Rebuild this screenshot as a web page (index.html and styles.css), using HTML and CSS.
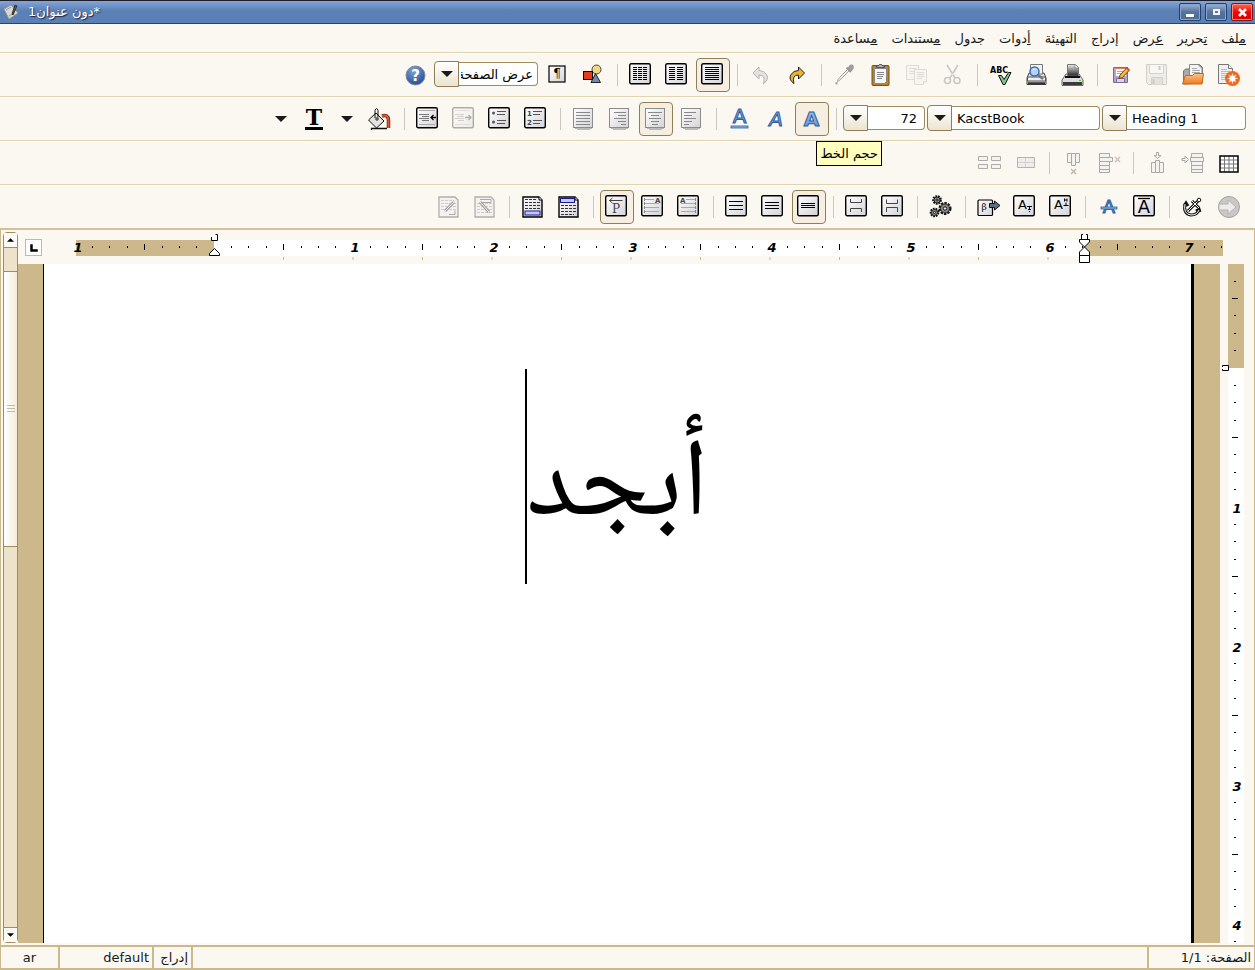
FILE: index.html
```html
<!DOCTYPE html>
<html lang="ar" dir="rtl">
<head>
  <meta charset="UTF-8"/>
  <meta name="viewport" content="width=device-width,initial-scale=1.0"/>
  <title>*دون عنوان1</title>
  <link rel="stylesheet" href="styles.css">
</head>
<body>
  <!-- shared fills -->
  <svg class="fills" aria-hidden="true">
    <defs>
      <linearGradient id="gPaper" x1="0" y1="0" x2="1" y2="1"><stop offset="0" stop-color="#fff"/><stop offset="1" stop-color="#d4d4d8"/></linearGradient>
      <linearGradient id="gOrange" x1="0" y1="0" x2="0" y2="1"><stop offset="0" stop-color="#fdc48a"/><stop offset="1" stop-color="#ee7a1c"/></linearGradient>
      <linearGradient id="gBlue" x1="0" y1="0" x2="0" y2="1"><stop offset="0" stop-color="#a9c8ec"/><stop offset="1" stop-color="#5b8fcf"/></linearGradient>
      <linearGradient id="gDark" x1="0" y1="0" x2="0" y2="1"><stop offset="0" stop-color="#eee"/><stop offset="1" stop-color="#222"/></linearGradient>
      <radialGradient id="gHelp" cx=".4" cy=".25" r=".8"><stop offset="0" stop-color="#7fa3d8"/><stop offset="1" stop-color="#1f4c94"/></radialGradient>
      <pattern id="ticksH" x="31" y="0" width="139" height="34" patternUnits="userSpaceOnUse">
        <path d="M17 17h1M34 17h1M52 17h1M87 17h1M104 17h1M121 17h1" stroke="#000" stroke-width="2"/>
        <path d="M69.500 14v6" stroke="#000"/>
      </pattern>
      <pattern id="ticksV" x="0" y="-35" width="16" height="139" patternUnits="userSpaceOnUse">
        <path d="M6 17.500h2M6 34.500h2M6 52.500h2M6 86.500h2M6 104.500h2M6 121.500h2M4 69.500h6" stroke="#000"/>
      </pattern>
    </defs>
  </svg>

  <!-- icon sprite -->
  <svg class="sprite" aria-hidden="true">
    <symbol id="frame" viewBox="0 0 24 24"><rect x=".7" y=".7" width="20.600" height="20" rx="1.500" fill="url(#gPaper)" stroke="#000" stroke-width="1.400"/></symbol>
    <symbol id="sheet" viewBox="0 0 24 24"><path d="M3 21.500h17M5 22.500h13" stroke="#bbb"/><rect x="1.500" y="1.500" width="19" height="19" fill="url(#gPaper)" stroke="#8c8c8c"/></symbol>

    <symbol id="i-new" viewBox="0 0 24 24"><path d="M1.500 1.500h10l4 4v15h-14z" fill="#f0f0f0" stroke="#777"/><path d="M11.500 1.500v4h4" fill="#fff" stroke="#777"/><path d="M4 6.500h6M4 8.500h9M4 10.500h9M4 12.500h6M4 14.500h5M4 16.500h5" stroke="#bbb"/><circle cx="15.500" cy="15.500" r="7.500" fill="#f5661b"/><path d="M15.500 10.500v10M10.500 15.500h10M12 12l7 7M19 12l-7 7" stroke="#ffd9b8" stroke-width="1.200"/><circle cx="15.500" cy="15.500" r="3" fill="#fff"/></symbol>
    <symbol id="i-open" viewBox="0 0 24 24"><path d="M2.500 21V8l2-2h5V1.500h9l3 3V20z" fill="#aaa" stroke="#777"/><path d="M8.500 1.500h8.500l4 4V14h-12.500z" fill="#f4f4f4" stroke="#888"/><path d="M11 5.500h5M11 7.500h8M11 9.500h8" stroke="#aaa"/><path d="M4.500 12.500h7l2-2h9l-1.500 10.500H1.500z" fill="url(#gOrange)" stroke="#c9681b"/></symbol>
    <symbol id="i-save" viewBox="0 0 24 24"><path d="M1.500 1.500h20v20h-18l-2-2z" fill="#efede9" stroke="#d2d0cd"/><path d="M4.500 2v8.500h14V2" fill="#f8f7f4" stroke="#d6d4d1"/><path d="M6.500 21.500v-7h11v7" fill="#e4e2de" stroke="#d2d0cd"/><path d="M14.500 3v4M8.500 16v5" stroke="#cccac7" stroke-width="2"/></symbol>
    <symbol id="i-edit" viewBox="0 0 24 24"><path d="M4.500 4.500h14v15h-14z" fill="#b8a5c8" stroke="#7e6b93"/><path d="M7 5h10v8H7z" fill="#fff"/><path d="M7 5.500h10" stroke="#e57d5b"/><path d="M8 8.500h6M8 10.500h5" stroke="#aaa"/><path d="M7.500 15.500h8v4h-8z" fill="#dcd6e4" stroke="#7e6b93"/><path d="M10 15.500l1-3.500 7-7.500 2.500 2.500-7 7.500z" fill="#f5b73c" stroke="#6d4c10"/><path d="M17 5.500l2.500 2.500 1-1-2.500-2.500z" fill="#d44"/></symbol>
    <symbol id="i-print" viewBox="0 0 24 24"><path d="M5 11h13l4 6v5.500H1V17z" fill="#ddd" stroke="#666"/><path d="M6.500 13V1.500h8l3 3V13z" fill="url(#gDark)" stroke="#777"/><path d="M14 1.500v3.500h3.500" fill="#fff" stroke="#888"/><path d="M4 14h15" stroke="#111" stroke-width="2"/><path d="M2 20.500h19" stroke="#3a3a3a" stroke-width="3"/><path d="M18 17.500h2" stroke="#5c3"/></symbol>
    <symbol id="i-preview" viewBox="0 0 24 24"><path d="M4 10h15l2 5v6.500H2V15z" fill="#ddd" stroke="#444"/><path d="M5.500 11V1.500h12V11z" fill="#f4f4f4" stroke="#777"/><path d="M2.500 14h18v4h-18z" fill="#eee" stroke="#555"/><path d="M3 20.500h17" stroke="#333" stroke-width="2.500"/><path d="M13 12l5 4" stroke="#777" stroke-width="2.500"/><circle cx="9.500" cy="8.500" r="4.500" fill="#b5d1f3" stroke="#3c6dac" stroke-width="1.500"/><path d="M7.500 7.500q1-2 3-1.500" stroke="#fff" fill="none"/></symbol>
    <symbol id="i-spell" viewBox="0 0 24 24"><text x="1" y="10" class="g-abc">ABC</text><path d="M9.500 12.500h3l2.500 4 4.500-7h2.500L16 21.500h-2z" fill="#7fc48a" stroke="#111"/></symbol>
    <symbol id="i-cut" viewBox="0 0 24 24"><g fill="none" stroke="#c9c7c3" stroke-width="1.600"><path d="M6 2l8 13M17 2L9 15"/><circle cx="6.500" cy="17.500" r="3"/><circle cx="16" cy="17.500" r="3"/></g><circle cx="11.500" cy="11" r="1.300" fill="#e5e3df"/></symbol>
    <symbol id="i-copy" viewBox="0 0 24 24"><g fill="#f7f5f1" stroke="#dddbd7"><path d="M1.500 2.500h12v14h-12z"/><path d="M4 5.500h7M4 8.500h5M4 10.500h5"/><path d="M9.500 6.500h12v12l-3 3h-9z"/><path d="M12 9.500h7M12 11.500h7M12 13.500h7M12 15.500h5M18.500 21.500v-3h3"/></g></symbol>
    <symbol id="i-paste" viewBox="0 0 24 24"><rect x="3" y="2.500" width="17" height="20" rx="1" fill="#b9822f" stroke="#7a5010"/><path d="M5.500 5.500h12v13l-2 2h-10z" fill="#f6f6f4" stroke="#888"/><path d="M7.500 4.500V3h2l1-1.500h2l1 1.500h2v1.500z" fill="#bbb" stroke="#555"/><path d="M8 9.500h7M8 11.500h7M8 13.500h6M8 15.500h5" stroke="#888"/></symbol>
    <symbol id="i-dropper" viewBox="0 0 24 24"><path d="M4.500 18.500q0-2 2-4l8-8 1.500 1.500-8 8q-2 2-3.500 2.500z" fill="#eee" stroke="#a5a3a0"/><path d="M13.500 4.500l4.500 4.500M15.500 6.500q1-4 3-4t1 3q-1 2-3 2" stroke="#9c9a98" stroke-width="2" fill="#aaa"/><path d="M3.500 19v2.500" stroke="#aaa" stroke-width="2"/></symbol>
    <symbol id="i-redo" viewBox="0 0 24 24"><path d="M9 20.500q-6-4-3-9 2.500-4 7.500-4V4l6 6-6 6v-4q-7 0-4.500 8.500z" fill="#ecb32b" stroke="#222"/></symbol>
    <symbol id="i-undo" viewBox="0 0 24 24"><path d="M14.500 20.500q6-4 3-9Q15 7.500 10 7.500V4L4 10l6 6v-4q7 0 4.500 8.500z" fill="#e4e2df" stroke="#b5b3b0"/></symbol>
    <symbol id="i-col1" viewBox="0 0 24 24"><use href="#frame"/><path d="M4 4.500h14M4 6.500h14M4 8.500h14M4 10.500h14M4 12.500h14M4 14.500h14M4 16.500h14" stroke="#000" stroke-width="1.200"/></symbol>
    <symbol id="i-col2" viewBox="0 0 24 24"><use href="#frame"/><path d="M4 4.500h14M4 6.500h14M4 8.500h14M4 10.500h14M4 12.500h14M4 14.500h14M4 16.500h14" stroke="#000" stroke-width="1.200" stroke-dasharray="6 2"/></symbol>
    <symbol id="i-col3" viewBox="0 0 24 24"><use href="#frame"/><path d="M4 4.500h14M4 6.500h14M4 8.500h14M4 10.500h14M4 12.500h14M4 14.500h14M4 16.500h14" stroke="#000" stroke-width="1.200" stroke-dasharray="4 1"/></symbol>
    <symbol id="i-shapes" viewBox="0 0 24 24"><circle cx="15.500" cy="6.500" r="4.500" fill="#f0d880" stroke="#444"/><rect x="2.500" y="8.500" width="9" height="8" fill="#e23c1c" stroke="#000"/><path d="M10 19.500l4.500-9 5 9z" fill="#7289b0" stroke="#222"/></symbol>
    <symbol id="i-pilcrow" viewBox="0 0 24 24"><rect x="4" y="3" width="16" height="16" fill="url(#gPaper)" stroke="#000" stroke-width="1.200"/><text x="12" y="15" text-anchor="middle" class="g-serif">¶</text></symbol>
    <symbol id="i-help" viewBox="0 0 24 24"><circle cx="12.500" cy="12.500" r="9.500" fill="url(#gHelp)" stroke="#7d8ba5"/><text x="12.500" y="18" text-anchor="middle" class="g-help">?</text></symbol>

    <symbol id="i-bold" viewBox="0 0 24 24"><text x="11.500" y="19" text-anchor="middle" class="g-blue g-bold">A</text></symbol>
    <symbol id="i-italic" viewBox="0 0 24 24"><text x="12" y="19" text-anchor="middle" class="g-blue g-italic">A</text></symbol>
    <symbol id="i-under" viewBox="0 0 24 24"><text x="11.500" y="16" text-anchor="middle" class="g-blue">A</text><rect x="3" y="19" width="17" height="2" fill="#8fb4e3" stroke="#2c5c9e" stroke-width=".8"/></symbol>
    <symbol id="i-left" viewBox="0 0 24 24"><use href="#sheet"/><path d="M4 5.500h12M4 8.500h8M4 11.500h12M4 14.500h8M4 17.500h5" stroke="#888"/></symbol>
    <symbol id="i-center" viewBox="0 0 24 24"><use href="#sheet"/><path d="M4 5.500h14M7 8.500h8M5 11.500h12M7 14.500h8M8 17.500h6" stroke="#888"/></symbol>
    <symbol id="i-right" viewBox="0 0 24 24"><use href="#sheet"/><path d="M6 5.500h12M10 8.500h8M6 11.500h12M10 14.500h8M13 17.500h5" stroke="#888"/></symbol>
    <symbol id="i-justify" viewBox="0 0 24 24"><use href="#sheet"/><path d="M4 5.500h14M4 8.500h14M4 11.500h14M4 14.500h14M4 17.500h14" stroke="#888"/></symbol>
    <symbol id="i-numbered" viewBox="0 0 24 24"><use href="#frame"/><text x="3" y="9" class="g-num">1</text><text x="3" y="18" class="g-num">2</text><path d="M9 4.500h9M9 7.500h7M9 13.500h9M9 16.500h7" stroke="#555"/></symbol>
    <symbol id="i-bullets" viewBox="0 0 24 24"><use href="#frame"/><circle cx="5.500" cy="6" r="1.500" fill="#555"/><circle cx="5.500" cy="15" r="1.500" fill="#555"/><path d="M9 4.500h9M9 7.500h8M9 13.500h9M9 16.500h8" stroke="#555"/></symbol>
    <symbol id="i-indent" viewBox="0 0 24 24"><use href="#frame"/><path d="M3 3.500h16M3 17.500h16" stroke="#aaa"/><path d="M3 7.500h10M6 9.500h7M3 11.500h10M6 13.500h7" stroke="#777"/><path d="M15 10.500h5M17.500 8l-2.500 2.500 2.500 2.500" stroke="#000" stroke-width="1.300" fill="none"/></symbol>
    <symbol id="i-outdent" viewBox="0 0 24 24"><use href="#frame"/><path d="M3 3.500h16M3 17.500h16" stroke="#aaa"/><path d="M3 7.500h9M5 9.500h7M3 11.500h9M6 13.500h6" stroke="#777"/><path d="M13 10.500h6M16.500 8l2.500 2.500-2.500 2.500" stroke="#000" stroke-width="1.300" fill="none"/></symbol>
    <symbol id="i-bucket" viewBox="0 0 24 24"><path d="M14 9q6-2 6.500 4v8" fill="none" stroke="#7d2214" stroke-width="3.500"/><path d="M14 9q6-2 6.500 4v8" fill="none" stroke="#dd5a3c" stroke-width="1.800"/><path d="M.500 13l7.500-7 8 8-7.500 7z" fill="#e4e4e2" stroke="#111"/><path d="M7 11V3.500q1.500-4 3 0v7" fill="none" stroke="#111"/><circle cx="9" cy="12" r="1.200" fill="#fff" stroke="#111"/><path d="M3.500 23v-1.500H19" fill="none" stroke="#111" stroke-width="1.300"/></symbol>
    <symbol id="i-color" viewBox="0 0 24 24"><text x="12" y="18" text-anchor="middle" class="g-t">T</text><path d="M3 21.500h18" stroke="#000" stroke-width="3"/></symbol>

    <symbol id="i-table" viewBox="0 0 24 24"><rect x="3" y="5" width="18" height="16" fill="#fff"/><path d="M3 9h18M3 13h18M3 17h18M7.500 5v16M12 5v16M16.500 5v16" stroke="#777"/><rect x="3" y="5" width="18" height="16" fill="none" stroke="#000" stroke-width="1.500"/></symbol>
    <symbol id="i-addrow" viewBox="0 0 24 24"><g fill="#f4f3f0" stroke="#aaa9a5"><path d="M10.500 2.500h11v4h-11zM9.500 6.500h13v4h-13zM10.500 10.500h11v4h-11zM10.500 14.500h11v4h-11zM10.500 18.500h11v3h-11z"/><path d="M1 7.500h3V5l3.500 3.500L4 12V9.500H1z"/></g></symbol>
    <symbol id="i-addcol" viewBox="0 0 24 24"><g fill="#f4f3f0" stroke="#aaa9a5"><path d="M6.500 11.500h4v10h-4zM10.500 9.500h4v12h-4zM14.500 11.500h4v10h-4z"/><path d="M11.500 1.500h2v3H16l-3.500 3L9 4.500h2.500z"/></g></symbol>
    <symbol id="i-delrow" viewBox="0 0 24 24"><g fill="#f4f3f0" stroke="#aaa9a5"><path d="M2.500 2.500h10v4h-10zM2.500 6.500h13v4h-13zM2.500 10.500h10v4h-10zM2.500 14.500h10v4h-10zM2.500 18.500h10v3h-10z"/><path d="M18 6l5 5M23 6l-5 5" stroke="#d1bfbb" stroke-width="1.500"/></g></symbol>
    <symbol id="i-delcol" viewBox="0 0 24 24"><g fill="#f4f3f0" stroke="#aaa9a5"><path d="M6.500 2.500h4v9h-4zM10.500 2.500h4v12h-4zM14.500 2.500h4v9h-4z"/><path d="M10 18l5 5M15 18l-5 5" stroke="#c9b7b3" stroke-width="1.500"/></g></symbol>
    <symbol id="i-merge" viewBox="0 0 24 24"><path d="M4.500 6.500h17v10h-17z" fill="#eeedeb" stroke="#b5b3b0"/><path d="M5 11.500h16M12.500 7v9" stroke="#d5d3d0"/></symbol>
    <symbol id="i-split" viewBox="0 0 24 24"><path d="M1.500 5.500h9v4h-9zM14.500 5.500h9v4h-9zM1.500 13.500h9v4h-9zM14.500 13.500h9v4h-9z" fill="#f4f3f0" stroke="#aeaca9"/></symbol>

    <symbol id="i-globe" viewBox="0 0 24 24"><circle cx="12" cy="12" r="10.500" fill="#c9c8c5" stroke="#a3a29f"/><path d="M2 9h9V5l8 7-8 7v-4H2z" fill="#edecea" stroke="#b5b4b1"/></symbol>
    <symbol id="i-anchor" viewBox="0 0 24 24"><g fill="none"><path d="M7 16L17 6M11 6l7 7M4 9q-2 10 6 11 6 0 8-5M3 11l2-3 2 3M15 16l3-2 1 3" stroke="#111" stroke-width="3"/><path d="M7 16L17 6M11 6l7 7M4 9q-2 10 6 11 6 0 8-5" stroke="#fff"/></g><circle cx="18" cy="5" r="1.800" fill="#fff" stroke="#111"/></symbol>
    <symbol id="i-overline" viewBox="0 0 24 24"><use href="#frame"/><path d="M5 3.500h12" stroke="#000" stroke-width="1.300"/><text x="11" y="18" text-anchor="middle" class="g-over">A</text></symbol>
    <symbol id="i-strike" viewBox="0 0 24 24"><text x="12" y="18" text-anchor="middle" class="g-blue g-small">A</text><rect x="4" y="12" width="16" height="2" fill="#8fb4e3" stroke="#2c5c9e" stroke-width=".8"/></symbol>
    <symbol id="i-super" viewBox="0 0 24 24"><use href="#frame"/><text x="5" y="14" class="g-a">A</text><path d="M15.500 3.500v3M18 3.500v3M15.500 5h2.500M14.500 10.500h5M17 7.500v3" stroke="#000"/></symbol>
    <symbol id="i-sub" viewBox="0 0 24 24"><use href="#frame"/><text x="5" y="14" class="g-a">A</text><path d="M14 11.500h5M16.500 11.500v3M15 14.500h3M16 16.500h1" stroke="#000"/></symbol>
    <symbol id="i-symbol" viewBox="0 0 24 24"><rect x="1" y="5" width="14.500" height="15.500" rx="1" fill="url(#gPaper)" stroke="#000" stroke-width="1.200"/><text x="7" y="15" text-anchor="middle" class="g-beta">β</text><path d="M12.500 8.500h5V6l5.500 4.500-5.500 4.500v-2.500h-5z" fill="#5b6f86" stroke="#111"/></symbol>
    <symbol id="i-gears" viewBox="0 0 24 24"><g fill="none" stroke="#111"><circle cx="8" cy="5" r="3.600" stroke-width="2.500" stroke-dasharray="1.700 .8"/><circle cx="16" cy="13.500" r="5" stroke-width="3" stroke-dasharray="2.200 1"/><circle cx="5.500" cy="17.500" r="3.600" stroke-width="2.500" stroke-dasharray="1.700 .8"/></g><g fill="#8b8b83" stroke="#222"><circle cx="8" cy="5" r="3"/><circle cx="16" cy="13.500" r="4.500"/><circle cx="5.500" cy="17.500" r="3"/></g><g fill="#efefe8" stroke="#111"><circle cx="8" cy="5" r="1"/><circle cx="16" cy="13.500" r="1.700"/><circle cx="5.500" cy="17.500" r="1"/></g></symbol>
    <symbol id="i-space12" viewBox="0 0 24 24"><use href="#frame"/><path d="M5.500 4v3.500h11V4M5.500 17v-3.500h11V17" fill="none" stroke="#444"/></symbol>
    <symbol id="i-space0" viewBox="0 0 24 24"><use href="#frame"/><path d="M5.500 4.500v4h11v-4M5.500 17v-4.500h11V17" fill="none" stroke="#444"/></symbol>
    <symbol id="i-single" viewBox="0 0 24 24"><use href="#frame"/><path d="M4 8.500h14M4 10.500h14M4 12.500h14" stroke="#000"/></symbol>
    <symbol id="i-middle" viewBox="0 0 24 24"><use href="#frame"/><path d="M4 7.500h14M4 10.500h14M4 13.500h14" stroke="#000" stroke-width="1.200"/></symbol>
    <symbol id="i-double" viewBox="0 0 24 24"><use href="#frame"/><path d="M4 6.500h14M4 10.500h14M4 14.500h14" stroke="#000" stroke-width="1.200"/></symbol>
    <symbol id="i-ltr" viewBox="0 0 24 24"><use href="#frame"/><path d="M9 4.500h9M4 8.500h14M4 12.500h14M4 16.500h14" stroke="#aaa"/><text x="3" y="8" class="g-num">A</text><path d="M18.500 3v15" stroke="#888" stroke-dasharray="3 1"/></symbol>
    <symbol id="i-rtl" viewBox="0 0 24 24"><use href="#frame"/><path d="M4 4.500h9M4 8.500h14M4 12.500h14M4 16.500h14" stroke="#aaa"/><text x="14" y="8" class="g-num">A</text><path d="M3.500 3v15" stroke="#888" stroke-dasharray="3 1"/></symbol>
    <symbol id="i-dir" viewBox="0 0 24 24"><use href="#frame"/><path d="M4.500 5.500h13M7.500 3l-3 2.500 3 2.500" stroke="#444" fill="none"/><text x="11" y="18" text-anchor="middle" class="g-p">P</text></symbol>
    <symbol id="i-header" viewBox="0 0 24 24"><path d="M2 2h16l3 3v17H2z" fill="url(#gPaper)" stroke="#000" stroke-width="1.400"/><path d="M18 2v3h3" fill="#fff" stroke="#000"/><rect x="3.500" y="3.500" width="14" height="4" fill="#c3c8ff" stroke="#1b1b8a"/><path d="M4 10.500h15M4 13.500h15M4 16.500h15M4 19.500h13" stroke="#333" stroke-dasharray="3 1"/></symbol>
    <symbol id="i-footer" viewBox="0 0 24 24"><path d="M2 2h16l3 3v17H2z" fill="url(#gPaper)" stroke="#000" stroke-width="1.400"/><path d="M18 2v3h3" fill="#fff" stroke="#000"/><rect x="4" y="16" width="15" height="4" fill="#c3c8ff" stroke="#1b1b8a"/><path d="M4 4.500h12M4 7.500h15M4 10.500h15M4 13.500h15" stroke="#333" stroke-dasharray="3 1"/></symbol>
    <symbol id="i-edhead" viewBox="0 0 24 24"><path d="M2 2h16l3 3v17H2z" fill="#f4f2ee" stroke="#b0aeab" stroke-width="1.300"/><path d="M4 8.500h15M4 11.500h15M4 14.500h15M4 17.500h15" stroke="#cfcdca" stroke-dasharray="3 1"/><path d="M7 4.500h11v3H9" fill="none" stroke="#aaa"/><path d="M7 7l9 10" stroke="#a5a3a0" stroke-width="3"/><path d="M7 7l9 10" stroke="#eee"/></symbol>
    <symbol id="i-edfoot" viewBox="0 0 24 24"><path d="M2 2h16l3 3v17H2z" fill="#f4f2ee" stroke="#b0aeab" stroke-width="1.300"/><path d="M4 5.500h13M4 8.500h15M4 11.500h15M4 14.500h15" stroke="#cfcdca" stroke-dasharray="3 1"/><path d="M12 19.500h6v-4" fill="none" stroke="#aaa"/><path d="M8 16l9-9" stroke="#a5a3a0" stroke-width="3"/><path d="M8 16l9-9" stroke="#eee"/></symbol>
    <symbol id="i-down" viewBox="0 0 12 6"><path d="M0 0h12L6 6z" fill="#1a1a1a"/></symbol>
  </svg>

  <header class="titlebar" dir="ltr">
    <svg class="app-icon" viewBox="0 0 16 16" aria-hidden="true"><path d="M1 5l7-4 7 8-9 6z" fill="#d9d9d6" stroke="#999"/><path d="M3 6l5-3M6 12l5-3" stroke="#999"/><path d="M9 10L12 1l2 1-4 9z" fill="#555" stroke="#333"/></svg>
    <span class="title" dir="rtl">*دون عنوان1</span>
    <button class="win-btn" aria-label="تصغير"><svg viewBox="0 0 20 16"><path d="M6 11.500h8" stroke="#fff" stroke-width="3"/></svg></button>
    <button class="win-btn" aria-label="تكبير"><svg viewBox="0 0 20 16"><rect x="8" y="6" width="5" height="4" fill="none" stroke="#fff" stroke-width="1.800"/></svg></button>
    <button class="win-btn close" aria-label="إغلاق"><svg viewBox="0 0 20 16"><path d="M7 5l7 7M14 5l-7 7" stroke="#fff" stroke-width="2.600"/></svg></button>
  </header>

  <nav class="menubar">
    <a href="#"><u>م</u>لف</a>
    <a href="#"><u>ت</u>حرير</a>
    <a href="#"><u>ع</u>رض</a>
    <a href="#">إدراج</a>
    <a href="#">التهيئة</a>
    <a href="#"><u>أ</u>دوات</a>
    <a href="#">جدول</a>
    <a href="#"><u>م</u>ستندات</a>
    <a href="#"><u>م</u>ساعدة</a>
  </nav>

  <div class="toolbar" role="toolbar">
    <button aria-label="جديد"><svg><use href="#i-new"/></svg></button>
    <button aria-label="فتح"><svg><use href="#i-open"/></svg></button>
    <button aria-label="حفظ" disabled><svg><use href="#i-save"/></svg></button>
    <button aria-label="حفظ باسم"><svg><use href="#i-edit"/></svg></button>
    <span class="sep"></span>
    <button aria-label="طباعة"><svg><use href="#i-print"/></svg></button>
    <button aria-label="معاينة"><svg><use href="#i-preview"/></svg></button>
    <button aria-label="تدقيق إملائي"><svg><use href="#i-spell"/></svg></button>
    <span class="sep"></span>
    <button aria-label="قص" disabled><svg><use href="#i-cut"/></svg></button>
    <button aria-label="نسخ" disabled><svg><use href="#i-copy"/></svg></button>
    <button aria-label="لصق"><svg><use href="#i-paste"/></svg></button>
    <button aria-label="نسخ التنسيق" disabled><svg><use href="#i-dropper"/></svg></button>
    <span class="sep"></span>
    <button aria-label="إعادة"><svg><use href="#i-redo"/></svg></button>
    <button aria-label="تراجع" disabled><svg><use href="#i-undo"/></svg></button>
    <span class="sep"></span>
    <button class="active" aria-label="عمود واحد"><svg><use href="#i-col1"/></svg></button>
    <button aria-label="عمودان"><svg><use href="#i-col2"/></svg></button>
    <button aria-label="ثلاثة أعمدة"><svg><use href="#i-col3"/></svg></button>
    <span class="sep"></span>
    <button aria-label="صورة"><svg><use href="#i-shapes"/></svg></button>
    <button aria-label="إظهار العلامات"><svg><use href="#i-pilcrow"/></svg></button>
    <div class="combo zoom">
      <select aria-label="التكبير"><option>عرض الصفحة</option></select>
      <span class="combo-arrow"><svg><use href="#i-down"/></svg></span>
    </div>
    <button aria-label="مساعدة"><svg><use href="#i-help"/></svg></button>
  </div>

  <div class="toolbar" role="toolbar">
    <div class="combo style">
      <select aria-label="النمط" dir="ltr"><option>Heading 1</option></select>
      <span class="combo-arrow"><svg><use href="#i-down"/></svg></span>
    </div>
    <div class="combo font">
      <select aria-label="الخط" dir="ltr"><option>KacstBook</option></select>
      <span class="combo-arrow"><svg><use href="#i-down"/></svg></span>
    </div>
    <div class="combo size">
      <select aria-label="حجم الخط"><option>72</option></select>
      <span class="combo-arrow"><svg><use href="#i-down"/></svg></span>
      <span class="tooltip" role="tooltip">حجم الخط</span>
    </div>
    <span class="sep"></span>
    <button class="active" aria-label="عريض"><svg><use href="#i-bold"/></svg></button>
    <button aria-label="مائل"><svg><use href="#i-italic"/></svg></button>
    <button aria-label="تسطير"><svg><use href="#i-under"/></svg></button>
    <span class="sep"></span>
    <button aria-label="يسار"><svg><use href="#i-left"/></svg></button>
    <button class="active" aria-label="وسط"><svg><use href="#i-center"/></svg></button>
    <button aria-label="يمين"><svg><use href="#i-right"/></svg></button>
    <button aria-label="ضبط"><svg><use href="#i-justify"/></svg></button>
    <span class="sep"></span>
    <button aria-label="ترقيم"><svg><use href="#i-numbered"/></svg></button>
    <button aria-label="تعداد"><svg><use href="#i-bullets"/></svg></button>
    <button class="dim" aria-label="إنقاص الإزاحة" disabled><svg><use href="#i-outdent"/></svg></button>
    <button aria-label="زيادة الإزاحة"><svg><use href="#i-indent"/></svg></button>
    <span class="sep"></span>
    <button aria-label="لون الخلفية"><svg><use href="#i-bucket"/></svg></button>
    <button class="drop" aria-label="اختر لون الخلفية"><svg><use href="#i-down"/></svg></button>
    <button aria-label="لون النص"><svg><use href="#i-color"/></svg></button>
    <button class="drop" aria-label="اختر لون النص"><svg><use href="#i-down"/></svg></button>
  </div>

  <div class="toolbar" role="toolbar">
    <button aria-label="إدراج جدول"><svg><use href="#i-table"/></svg></button>
    <button aria-label="إضافة صف" disabled><svg><use href="#i-addrow"/></svg></button>
    <button aria-label="إضافة عمود" disabled><svg><use href="#i-addcol"/></svg></button>
    <span class="sep"></span>
    <button aria-label="حذف صف" disabled><svg><use href="#i-delrow"/></svg></button>
    <button aria-label="حذف عمود" disabled><svg><use href="#i-delcol"/></svg></button>
    <span class="sep"></span>
    <button aria-label="دمج الخلايا" disabled><svg><use href="#i-merge"/></svg></button>
    <button aria-label="تقسيم الخلايا" disabled><svg><use href="#i-split"/></svg></button>
  </div>

  <div class="toolbar last" role="toolbar">
    <button aria-label="وصلة" disabled><svg><use href="#i-globe"/></svg></button>
    <button aria-label="علامة"><svg><use href="#i-anchor"/></svg></button>
    <span class="sep"></span>
    <button aria-label="خط علوي"><svg><use href="#i-overline"/></svg></button>
    <button aria-label="يتوسطه خط"><svg><use href="#i-strike"/></svg></button>
    <span class="sep"></span>
    <button aria-label="مرتفع"><svg><use href="#i-super"/></svg></button>
    <button aria-label="منخفض"><svg><use href="#i-sub"/></svg></button>
    <button aria-label="رمز"><svg><use href="#i-symbol"/></svg></button>
    <span class="sep"></span>
    <button aria-label="تنفيذ"><svg><use href="#i-gears"/></svg></button>
    <span class="sep"></span>
    <button aria-label="بلا مسافة"><svg><use href="#i-space0"/></svg></button>
    <button aria-label="مسافة قبل"><svg><use href="#i-space12"/></svg></button>
    <span class="sep"></span>
    <button class="active" aria-label="تباعد مفرد"><svg><use href="#i-single"/></svg></button>
    <button aria-label="تباعد 1.5"><svg><use href="#i-middle"/></svg></button>
    <button aria-label="تباعد مزدوج"><svg><use href="#i-double"/></svg></button>
    <span class="sep"></span>
    <button aria-label="نص من اليسار"><svg><use href="#i-ltr"/></svg></button>
    <button aria-label="نص من اليمين"><svg><use href="#i-rtl"/></svg></button>
    <button class="active" aria-label="اتجاه الفقرة"><svg><use href="#i-dir"/></svg></button>
    <span class="sep"></span>
    <button aria-label="رأس الصفحة"><svg><use href="#i-header"/></svg></button>
    <button aria-label="تذييل الصفحة"><svg><use href="#i-footer"/></svg></button>
    <span class="sep"></span>
    <button aria-label="حذف الرأس" disabled><svg><use href="#i-edhead"/></svg></button>
    <button aria-label="حذف التذييل" disabled><svg><use href="#i-edfoot"/></svg></button>
  </div>

  <main class="workspace" dir="ltr">
    <div class="scrollbar">
      <button aria-label="أعلى"><svg viewBox="0 0 8 4"><path d="M4 0l4 4H0z"/></svg></button>
      <div class="track">
        <div class="thumb"></div>
      </div>
      <button aria-label="أسفل"><svg viewBox="0 0 8 4"><path d="M0 0h8L4 4z"/></svg></button>
    </div>

    <div class="ruler">
      <button class="tab-btn" aria-label="علامة جدولة"><svg viewBox="0 0 8 8"><path d="M2 1v5h5" fill="none" stroke="#000" stroke-width="2"/></svg></button>
      <svg class="ruler-h">
        <rect x="32" y="10" width="1147" height="16" fill="#cdb88b"/>
        <rect x="170" y="10" width="870" height="16" fill="#fff"/>
        <rect x="33" y="10" width="1146" height="16" fill="url(#ticksH)"/>
        <path d="M239 28.500h800" stroke="#cdb88b" stroke-width="3" stroke-dasharray="1 68.500"/>
        <g text-anchor="middle">
          <text x="34" y="22">1</text>
          <text x="311" y="22">1</text>
          <text x="450" y="22">2</text>
          <text x="589" y="22">3</text>
          <text x="728" y="22">4</text>
          <text x="867" y="22">5</text>
          <text x="1006" y="22">6</text>
          <text x="1145" y="22">7</text>
        </g>
        <g fill="#fff" stroke="#000">
          <path d="M167.500 7v3.500h6V4.500h-2M165.500 25.500h10v-2l-5-5-5 5z"/>
          <path d="M1039 4.500h-1.500v5h6v-5H1042M1035.500 9.500h10v2.500l-5 5 5 5v3.500h-10V22l5-5-5-5zM1035.500 25.500h10v7h-10z"/>
        </g>
      </svg>
    </div>

    <div class="canvas">
      <article class="page" contenteditable="true" dir="rtl" spellcheck="false">
        <h1>أبجد<span class="caret"></span></h1>
      </article>
    </div>

    <svg class="ruler-v">
      <rect x="8" width="16" height="100%" fill="#fff"/>
      <rect x="8" width="16" height="104" fill="#cdb88b"/>
      <g transform="translate(8 0)">
        <rect y="2" width="16" height="100%" fill="url(#ticksV)"/>
        <g text-anchor="middle">
          <text x="9" y="249">1</text>
          <text x="9" y="388">2</text>
          <text x="9" y="527">3</text>
          <text x="9" y="666">4</text>
        </g>
      </g>
      <path d="M2.500 103v-1.500h6v5h-6v-1.500" fill="#fff" stroke="#000"/>
    </svg>
  </main>

  <footer class="statusbar">
    <span class="cell page-no">الصفحة: 1/1</span>
    <span class="cell message"></span>
    <span class="cell mode">إدراج</span>
    <span class="cell format">default</span>
    <span class="cell lang">ar</span>
  </footer>
</body>
</html>
```

FILE: styles.css
```css
* { box-sizing: border-box; }

body {
  margin: 0;
  height: 100vh;
  display: flex;
  flex-direction: column;
  overflow: hidden;
  background: #fbf8f1;
  color: #1a1a1a;
  font: 13px "DejaVu Sans", sans-serif;
}
button, select { font: inherit; color: inherit; }
button {
  padding: 0;
  border: 1px solid transparent;
  background: none;
}
svg { direction: ltr; }
.fills { position: absolute; width: 0; height: 0; }
.sprite { display: none; }

/* title bar */
.titlebar {
  display: flex;
  align-items: center;
  gap: 4px;
  height: 24px;
  padding: 0 2px 0 3px;
  border-top: 1px solid #1d1d28;
  border-bottom: 1px solid #2c4468;
  background: linear-gradient(#84a5d8, #5a80b6 45%, #5a80b6);
}
.app-icon { width: 16px; height: 16px; }
.title {
  flex: 1;
  padding-left: 5px;
  color: #fff;
  line-height: 22px;
  text-align: left;
  text-shadow: 1px 1px 1px #223;
}
.win-btn {
  width: 22px;
  height: 18px;
  border: 1px solid #27406a;
  border-radius: 2px;
  background: linear-gradient(#9db3d2, #54739f 50%, #4c6c99);
  box-shadow: inset 0 0 0 1px #89a3c9;
}
.win-btn svg { display: block; width: 20px; height: 16px; }
.close {
  border-color: #7c1a1a;
  background: linear-gradient(#ff6a50, #e80c0c 50%, #d80000);
  box-shadow: inset 0 0 0 1px #ff8a7a;
}

/* menu */
.menubar {
  display: flex;
  align-items: center;
  gap: 14px;
  height: 29px;
  padding: 0 9px;
  border-bottom: 1px solid #e0d3b0;
}
.menubar a { color: inherit; text-decoration: none; }

/* toolbars */
.toolbar {
  display: flex;
  align-items: center;
  gap: 2px;
  height: 44px;
  padding: 5px 9px 4px;
  border-bottom: 1px solid #e0d3b0;
  box-shadow: inset 0 1px #fff;
}
.toolbar.last { height: 45px; border-bottom: 2px solid #d3c094; }
.toolbar button {
  display: grid;
  place-items: center;
  flex: none;
  width: 34px;
  height: 34px;
  border-radius: 4px;
}
.toolbar button svg { width: 24px; height: 24px; }
.toolbar .active { border-color: #8f7f58; background: #f6eee1; }
.toolbar .drop { width: 28px; }
.toolbar .drop svg, .combo-arrow svg { width: 12px; height: 6px; }
.dim { opacity: 0.3; }
.sep {
  flex: none;
  width: 10px;
  height: 22px;
  background: linear-gradient(#c9c7c2, #c9c7c2) center / 1px 100% no-repeat;
}

.combo { position: relative; display: flex; flex: none; height: 26px; margin-bottom: 2px; }
.combo select {
  appearance: none;
  flex: 1;
  min-width: 0;
  height: 24px;
  margin: 1px 0;
  padding: 0 5px;
  border: 1px solid #a08c5c;
  border-radius: 0 4px 4px 0;
  border-left: 0;
  background: #fff;
  color: #000;
}
.combo-arrow {
  display: grid;
  place-items: center;
  width: 25px;
  border: 1px solid #8f7f58;
  border-radius: 4px 0 0 4px;
  background: linear-gradient(#fff, #ece4d0);
  pointer-events: none;
}
.combo.zoom { width: 104px; }
.combo.zoom select { padding: 0 4px 0 2px; }
.combo.style { width: 144px; }
.combo.font { width: 173px; }
.combo.size { width: 82px; }
.combo.size select { padding: 0 7px; }

.tooltip {
  position: absolute;
  top: 36px;
  right: 43px;
  z-index: 2;
  height: 25px;
  padding: 0 3px;
  border: 1px solid #000;
  background: #ffffbf;
  color: #000;
  line-height: 23px;
  white-space: nowrap;
}

/* lettering inside the icons */
.g-abc { font: bold 8px "DejaVu Sans", sans-serif; }
.g-serif { font: 12px "DejaVu Serif", serif; }
.g-help { font: bold 15px "DejaVu Sans", sans-serif; fill: #fff; }
.g-blue { font: 20px "DejaVu Sans", sans-serif; fill: url(#gBlue); stroke: #2c5c9e; }
.g-bold { font-weight: bold; }
.g-small { font-size: 18px; }
.g-italic { font-style: oblique; }
.g-num { font: bold 7px "DejaVu Sans", sans-serif; fill: #444; }
.g-t { font: bold 22px "DejaVu Serif", serif; }
.g-over { font: 18px "DejaVu Sans", sans-serif; }
.g-a { font: 13px "DejaVu Sans", sans-serif; }
.g-beta { font: 9px "DejaVu Serif", serif; }
.g-p { font: 12px "DejaVu Serif", serif; fill: #444; }

/* document area */
.workspace {
  flex: 1;
  min-height: 0;
  display: grid;
  grid-template: 34px 1fr / 15px 1fr 34px;
  padding: 0 0 2px 2px;
  border-left: 1px solid #cdb88b;
  border-right: 1px solid #cdb88b;
}
.scrollbar {
  grid-row: 1 / 3;
  display: flex;
  flex-direction: column;
  margin-top: 2px;
  border: 1px solid #a08c5c;
  border-radius: 4px;
  background: #ede3cb;
}
.scrollbar button {
  display: grid;
  place-items: center;
  height: 14px;
  background: #fdfbf6;
}
.scrollbar svg { width: 7px; height: 4px; }
.track { flex: 1; padding-top: 23px; border: solid #a08c5c; border-width: 1px 0; }
.thumb {
  height: 42%;
  border: solid #a08c5c;
  border-width: 1px 0;
  background:
    repeating-linear-gradient(#c9bd9e 0 1px, transparent 1px 3px) center / 8px 7px no-repeat,
    linear-gradient(90deg, #fff, #f3ecdc);
}
.ruler { grid-column: 2 / 4; display: flex; gap: 2px; padding-left: 7px; }
.tab-btn {
  align-self: center;
  width: 17px;
  height: 17px;
  border: 1px solid #cdb88b;
  background: #fff;
}
.tab-btn svg { display: block; width: 10px; height: 10px; margin: 3px; }
.ruler-h { flex: 1; height: 34px; }
.ruler-h text, .ruler-v text { font: oblique bold 13px "DejaVu Sans", sans-serif; }
.ruler-v { width: 34px; height: 100%; }

.canvas {
  display: flex;
  padding: 0 26px 0 25px;
  background: #cdb88b;
  overflow: hidden;
}
.page {
  flex: 1;
  padding: 105px 172px 0 170px;
  border-left: 1px solid #000;
  border-right: 3px solid #000;
  background: #fff;
  outline: 0;
}
.page h1 {
  display: flex;
  justify-content: center;
  height: 215px;
  margin: 0;
  color: #000;
  font: 110px/243px KacstBook, "Noto Naskh Arabic", Amiri, "DejaVu Sans", serif;
}
.caret { width: 2px; height: 215px; background: #000; }

/* status bar */
.statusbar {
  display: flex;
  height: 25px;
  border: 2px solid #cdb88b;
  border-width: 2px 1px;
  line-height: 21px;
}
.cell { padding: 0 3px; border-left: 2px solid #cdb88b; white-space: nowrap; }
.page-no { width: 107px; }
.message { flex: 1; }
.format { width: 94px; direction: ltr; text-align: right; }
.mode { width: 39px; }
.lang { width: 57px; border-left: 0; text-align: center; }
```
